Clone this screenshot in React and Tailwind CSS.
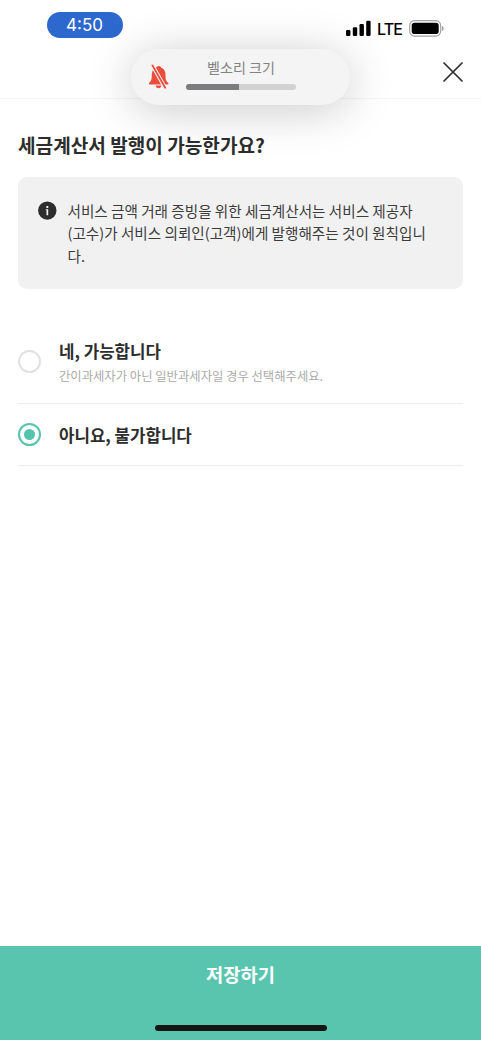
import React from "react";

function StatusBar() {
  return (
    <div className="flex h-[45px] items-start justify-between pl-[47px] pr-[36px] pt-3">
      <div className="flex h-[26px] w-[76px] items-center justify-center rounded-full bg-[#2d68cf] pr-px font-['Inter',sans-serif] text-[17px] leading-none text-white">
        4:50
      </div>
      <div className="mt-2 flex h-[17px] items-center">
        <svg className="h-[17px] w-[25px]" viewBox="0 0 25 17">
          <rect x="0" y="10" width="4.4" height="6" rx="1.2" />
          <rect x="6.8" y="7.2" width="4.4" height="8.8" rx="1.2" />
          <rect x="13.5" y="4" width="4.4" height="12" rx="1.2" />
          <rect x="20.2" y="0.7" width="4.4" height="15.3" rx="1.2" />
        </svg>
        <span className="ml-[6px] mt-[2px] w-[25px] font-['Inter',sans-serif] text-[16px] font-medium leading-[17px] tracking-[-0.9px] text-black">
          LTE
        </span>
        <svg className="ml-[7px] h-[17px] w-[36px]" viewBox="0 0 36 17">
          <rect x="0.7" y="0.7" width="31" height="15.4" rx="4.8" fill="none" stroke="#a2a2a2" strokeWidth="1.2" />
          <rect x="2.7" y="2.8" width="27" height="11.2" rx="2.8" />
          <path d="M33 6v5.2c1-.3 1.7-1.4 1.7-2.6S34 6.3 33 6z" fill="#a2a2a2" />
        </svg>
      </div>
    </div>
  );
}

function VolumeHud() {
  return (
    <div className="absolute left-[131px] top-[49px] flex h-[56px] w-[219px] rounded-full bg-[#f4f4f4] pl-[17px] shadow-[0_5px_46px_rgba(0,0,0,0.21)]">
      <svg className="mt-[15px] h-[26px] w-[21px]" viewBox="0 0 21 26">
        <g fill="#eb4d3d">
          <path d="M10.8 1.9C9.4 1.9 8.7 2.7 8.4 3.6 5 4.8 3.9 7.4 3.8 10.5c0 5-.5 6.4-2.4 8.1-.8.8-.6 1.9.4 1.9h17.7c1.2 0 1.4-1.1.4-1.9-2-1.7-2.4-3.1-2.4-8.1 0-3.1-1.2-5.7-4.3-6.8C12.8 2.7 12.1 1.9 10.8 1.9z" />
          <path d="M7.7 21.6h5.6c-.1 1.7-1.3 2.7-2.8 2.7s-2.7-1-2.8-2.7z" />
        </g>
        <path d="M4.3 1.2 17.4 24.2" stroke="#f4f4f4" strokeWidth="3.8" />
        <path d="M4.4 1.4 17.2 23.8" stroke="#eb4d3d" strokeWidth="1.8" strokeLinecap="round" />
      </svg>
      <div className="ml-[17px] w-[110px]">
        <div className="mt-[8px] whitespace-nowrap text-center text-[14.1px] leading-[20px] text-[#828284]">벨소리 크기</div>
        <div className="mt-[7px] h-[6px] overflow-hidden rounded-full bg-[#d2d2d2]">
          <div className="h-full w-[53px] bg-[#7c7c7f]" />
        </div>
      </div>
    </div>
  );
}

function Radio({ checked }) {
  return (
    <span
      className={
        checked
          ? "flex size-[23px] shrink-0 items-center justify-center rounded-full border-2 border-[#56c3ad] bg-white"
          : "flex size-[23px] shrink-0 rounded-full border-2 border-[#e1e1e1] bg-white"
      }
    >
      {checked && <span className="size-[11px] rounded-full bg-[#56c3ad]" />}
    </span>
  );
}

export default function App() {
  return (
    <div className="relative flex h-[1040px] w-[481px] flex-col overflow-hidden bg-white font-['Noto_Sans_CJK_KR',sans-serif] text-[#2d2d2d]">
      <StatusBar />
      <header className="flex h-[54px] items-center justify-end border-b border-[#f5f5f5] pr-[18px]">
        <button aria-label="닫기">
          <svg className="size-[20px]" viewBox="0 0 20 20" fill="none" stroke="#2d2d2d" strokeWidth="1.7" strokeLinecap="round">
            <path d="M1 1 19 19M19 1 1 19" />
          </svg>
        </button>
      </header>
      <VolumeHud />

      <main className="flex flex-1 flex-col px-[18px]">
        <h1 className="mt-8 whitespace-nowrap text-[19.1px] font-bold leading-[28px]">세금계산서 발행이 가능한가요?</h1>
        <section className="flex h-[112px] mt-[18px] rounded-[9px] bg-[#f1f1f1] pl-5 pt-[23px]">
          <svg className="mt-[1px] size-[19px] shrink-0" viewBox="0 0 19 19">
            <circle cx="9.3" cy="9.6" r="9.2" fill="#2d2d2d" />
            <rect x="8.3" y="4.9" width="2" height="2" rx="0.4" fill="#f1f1f1" />
            <path d="M7.8 8.3h2.4v5.9H8.5V9.3h-.7z" fill="#f1f1f1" />
          </svg>
          <p className="ml-[10.5px] whitespace-nowrap text-[14.6px] leading-[22.3px] text-[#3c3c3c]">
            서비스 금액 거래 증빙을 위한 세금계산서는 서비스 제공자
            <br />
            (고수)가 서비스 의뢰인(고객)에게 발행해주는 것이 원칙입니
            <br />
            다.
          </p>
        </section>
        <label className="mt-[30px] flex h-[85px] items-center gap-[18px] border-b border-[#eeeeee]">
          <Radio checked={false} />
          <span className="flex flex-col pt-[4px]">
            <span className="text-[16.8px] font-bold leading-[26px]">네, 가능합니다</span>
            <span className="whitespace-nowrap text-[12.33px] leading-[24px] text-[#aaaaaa]">
              간이과세자가 아닌 일반과세자일 경우 선택해주세요.
            </span>
          </span>
        </label>
        <label className="flex h-[62px] items-center gap-[18px] border-b border-[#eeeeee]">
          <Radio checked />
          <span className="text-[16.8px] font-bold leading-[26px]">아니요, 불가합니다</span>
        </label>
      </main>

      <footer className="flex h-[94px] flex-col items-center bg-[#5ac5af]">
        <button className="mt-[14px] text-[18.7px] font-bold leading-[28px] text-white">저장하기</button>
        <div className="mt-[37px] h-[6px] w-[172px] rounded-full bg-[#151515]" />
      </footer>
    </div>
  );
}
